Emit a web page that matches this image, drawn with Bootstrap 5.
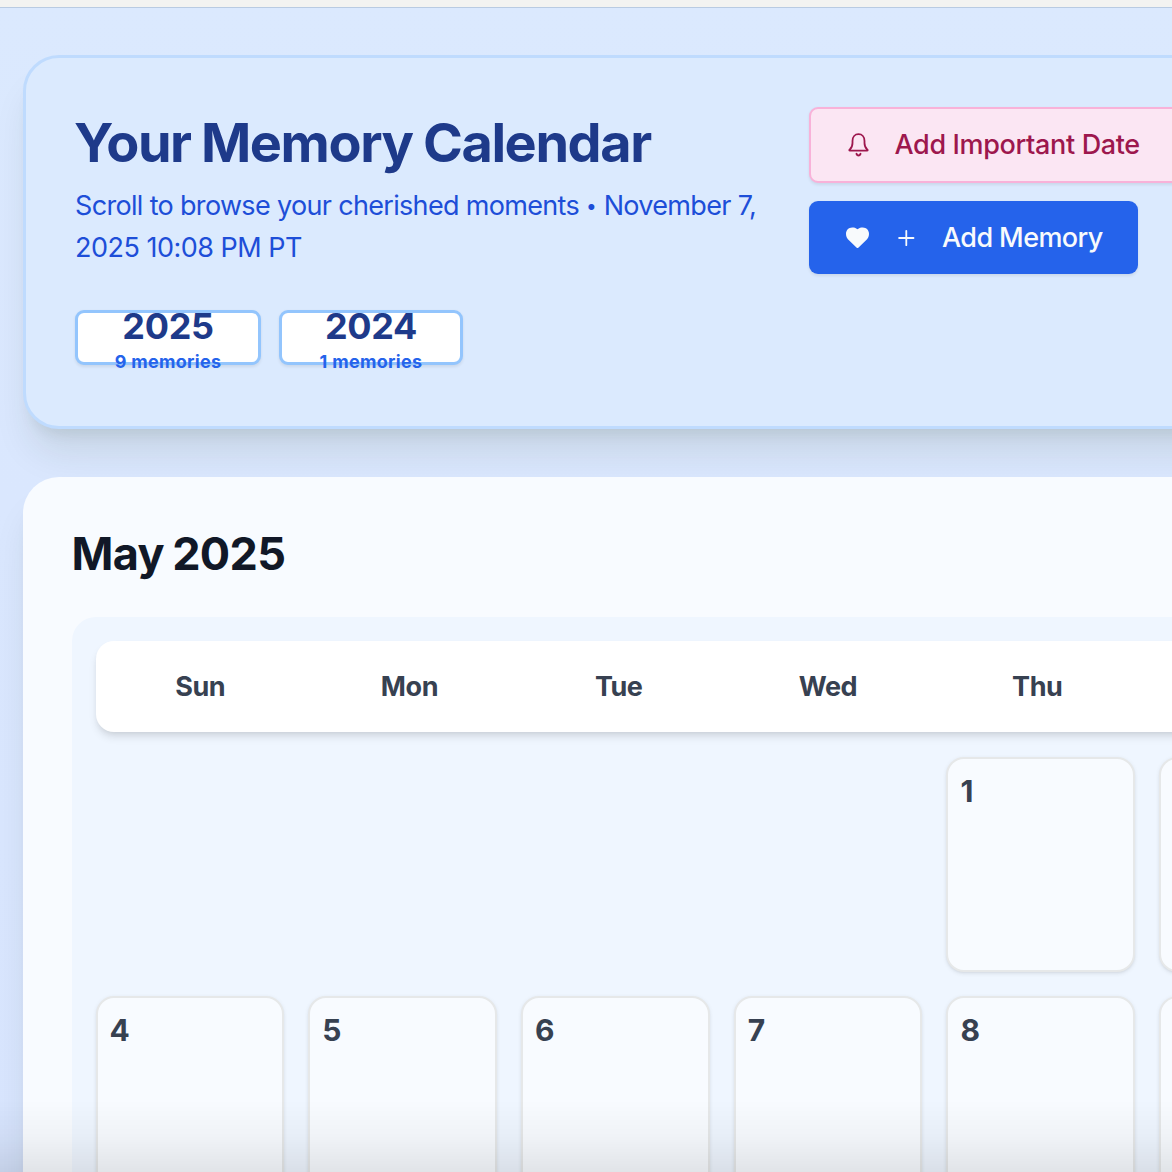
<!DOCTYPE html>
<html lang="en">
<head>
<meta charset="utf-8">
<meta name="viewport" content="width=device-width, initial-scale=1">
<title>Your Memory Calendar</title>
<link href="https://cdn.jsdelivr.net/npm/bootstrap@5.3.0/dist/css/bootstrap.min.css" rel="stylesheet">
<style>
  body { font-family: Inter, sans-serif; height: 1172px; background: linear-gradient(180deg, #dbe9fe, #dae7fe 500px, #d8e5fe); }
  .top-strip { height: 8px; background: #f3f3f1; border-bottom: 1px solid #b9cbe2; }
  .page-wrap { width: 1610px; margin: 47px 0 0 23px; }
  .hero { height: 374px; background: #dbeafe; border: 3px solid #bfdbfe; border-radius: 36px; padding: 49px; }
  .hero, .month-card { box-shadow: 0 30px 37.5px -7.5px rgba(30,50,0,.1), 0 12px 15px -9px rgba(20,40,0,.1); }
  .hero-copy { width: 734px; }
  .hero-title { font-size: 54px; font-weight: 700; line-height: 60px; letter-spacing: -1.4px; word-spacing: -1.2px; color: #1e3a8a; margin: 6px 0 12px -1px; }
  .hero-sub { font-size: 27px; line-height: 42px; letter-spacing: -.67px; color: #1d4ed8; margin: 0 0 41px; white-space: nowrap; }
  .hero-sub .dot { font-size: 19px; line-height: 1; vertical-align: 2px; letter-spacing: 0; }
  .hero-sub .clock { letter-spacing: -.5px; }
  .year-btn { width: 186px; height: 55px; border: 3px solid #93c5fd; border-radius: 9px; background: #fff; box-shadow: 0 1.5px 3px rgba(0,0,0,.08); }
  .year-btn-sm { width: 184px; }
  .year-list { gap: 18px; }
  .year-num { font-size: 36px; font-weight: 700; line-height: 42px; letter-spacing: -.3px; color: #1e3a8a; margin-top: 3px; }
  .year-count { font-size: 18px; font-weight: 700; line-height: 24px; letter-spacing: .3px; color: #2563eb; margin-top: 3px; }
  .hero-actions { gap: 18px; }
  .act { font-size: 27px; font-weight: 500; border-radius: 9px; letter-spacing: -.35px; box-shadow: 0 1.5px 3px rgba(0,0,0,.08); white-space: nowrap; gap: 24.5px; padding: 0 36px; }
  .act svg { width: 24px; height: 24px; flex: none; }
  .act-date { height: 76px; width: 383px; background: #fbe6f3; border: 2px solid #f8b2d9; color: #9d174d; padding-left: 35px; }
  .act-memory { height: 73px; width: 329px; background: #2563eb; color: #f8fafc; letter-spacing: -.6px; padding-top: 1px; }
  .act-memory svg { margin-top: -1px; }
  .month-card { margin-top: 48px; height: 900px; background: #f8fbff; border-radius: 36px; padding: 48px 48.5px; }
  .month-title { font-size: 45px; font-weight: 700; line-height: 58px; letter-spacing: -.65px; word-spacing: -1.8px; color: #111827; margin: 0 0 34px; }
  .cal-panel { background: #eff6ff; border-radius: 24px; padding: 24px; height: 800px; }
  .week-head { height: 91px; background: #fff; border-radius: 18px; box-shadow: 0 6px 9px -1.5px rgba(0,0,0,.1), 0 3px 6px -3px rgba(0,0,0,.1); font-size: 27px; font-weight: 700; letter-spacing: -.45px; color: #374151; padding-top: 1px; margin-bottom: 24.5px; }
  .day-grid { display: grid; grid-template-columns: repeat(7, 1fr); grid-auto-rows: 215.4px; gap: 24.2px; }
  .day-cell { background: #f8fbff; border: 2px solid #e6e8e9; border-radius: 18px; box-shadow: 0 1.5px 4px rgba(0,0,0,.07), 0 1.5px 3px -1.5px rgba(0,0,0,.1); padding: 11px 12px; font-size: 30px; font-weight: 700; line-height: 42px; color: #374151; }
  .bottom-fade { height: 72px; background: linear-gradient(to bottom, rgba(0,0,0,0), rgba(0,0,0,.03) 50%, rgba(0,0,0,.09)); pointer-events: none; }
</style>
<script src="https://cdn.jsdelivr.net/npm/bootstrap@5.3.0/dist/js/bootstrap.bundle.min.js"></script>
</head>
<body class="overflow-hidden">
<div class="top-strip"></div>
<main class="page-wrap">
  <section class="hero d-flex">
    <div class="hero-copy flex-shrink-0">
      <h1 class="hero-title">Your Memory Calendar</h1>
      <p class="hero-sub">Scroll to browse your cherished moments <span class="dot">•</span> November 7,<br><span class="clock">2025 10:08 PM PT</span></p>
      <div class="year-list d-flex">
        <div class="year-btn d-flex flex-column align-items-center justify-content-center"><span class="year-num">2025</span><span class="year-count">9 memories</span></div>
        <div class="year-btn year-btn-sm d-flex flex-column align-items-center justify-content-center"><span class="year-num">2024</span><span class="year-count">1 memories</span></div>
      </div>
    </div>
    <div class="hero-actions d-flex flex-column">
      <div class="act act-date d-flex align-items-center">
        <svg viewBox="0 0 24 24" fill="none" stroke="currentColor" stroke-width="1.8" stroke-linecap="round" stroke-linejoin="round"><path d="M3.8 16.5C5.4 15 6.5 13.2 6.5 10V8C6.5 3.9 8.9 1.2 12.5 1.2S18.5 3.9 18.5 8v2c0 3.2 1.1 5 2.7 6.5.8.7.6 1.2-.2 1.2H4c-.8 0-1-.5-.2-1.2z"/><path d="M10.5 20.8c.9 2.1 3.1 2.1 4 0" stroke-width="2"/></svg>
        <span>Add Important Date</span>
      </div>
      <div class="act act-memory d-flex align-items-center">
        <svg viewBox="0 0 24 24" fill="currentColor"><path d="M12.5 3.3C14.2 1.8 16 1.5 17.8 1.5C21.4 1.5 24 4.3 24 7.9C24 10.8 22.600 12.600 20.800 14.400L13.300 21.700Q12.500 22.500 11.700 21.700L4.200 14.400C2.400 12.600 1 10.800 1 7.900C1 4.300 3.600 1.500 7.200 1.500C9 1.500 10.800 1.800 12.500 3.300z"/></svg>
        <svg viewBox="0 0 24 24" fill="none" stroke="currentColor" stroke-width="1.8" stroke-linecap="round"><path d="M12.3 4.800v14.400M5.100 12h14.400"/></svg>
        <span>Add Memory</span>
      </div>
    </div>
  </section>
  <section class="month-card">
    <h2 class="month-title">May 2025</h2>
    <div class="cal-panel">
      <div class="week-head row g-0 align-items-center text-center">
        <div class="col">Sun</div><div class="col">Mon</div><div class="col">Tue</div><div class="col">Wed</div><div class="col">Thu</div><div class="col"></div><div class="col"></div>
      </div>
      <div class="day-grid">
        <div></div><div></div><div></div><div></div>
        <div class="day-cell">1</div><div class="day-cell"></div><div class="day-cell"></div>
        <div class="day-cell">4</div><div class="day-cell">5</div><div class="day-cell">6</div><div class="day-cell">7</div><div class="day-cell">8</div><div class="day-cell"></div><div class="day-cell"></div>
      </div>
    </div>
  </section>
</main>
<div class="bottom-fade fixed-bottom"></div>
</body>
</html>
